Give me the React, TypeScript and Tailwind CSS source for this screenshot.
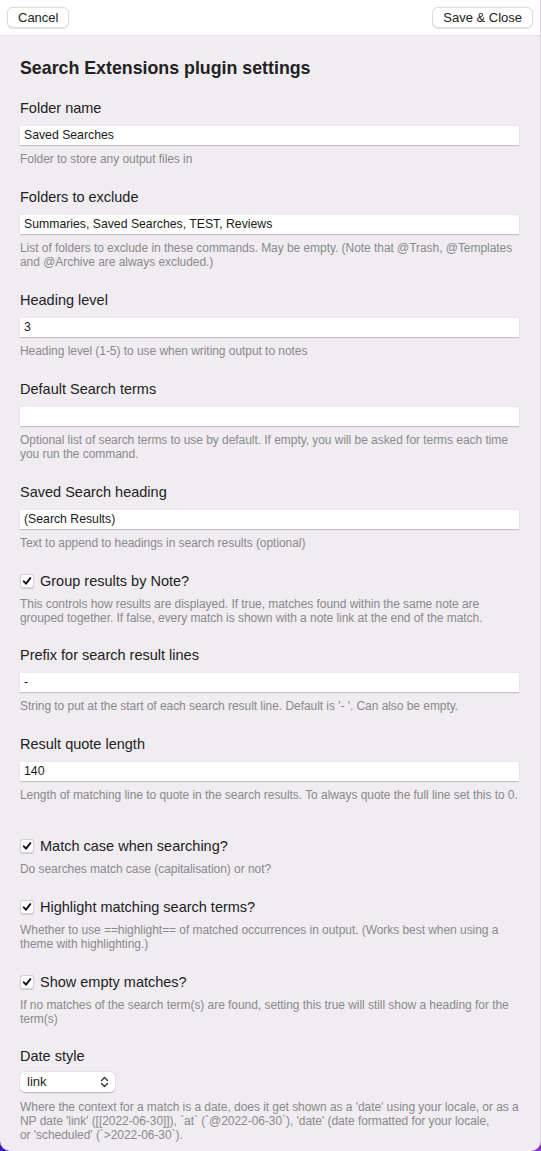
import React from 'react';

type Field =
  | { kind: 'text'; label: string; value: string; help: string[]; gap?: string }
  | { kind: 'check'; label: string; help: string[]; gap?: string }
  | { kind: 'select'; label: string; value: string; help: string[]; gap?: string };

const fields: Field[] = [
  { kind: 'text', label: 'Folder name', value: 'Saved Searches', help: ['Folder to store any output files in'], gap: 'mt-[18px]' },
  {
    kind: 'text',
    label: 'Folders to exclude',
    value: 'Summaries, Saved Searches, TEST, Reviews',
    help: [
      'List of folders to exclude in these commands. May be empty. (Note that @Trash, @Templates',
      'and @Archive are always excluded.)',
    ],
  },
  { kind: 'text', label: 'Heading level', value: '3', help: ['Heading level (1-5) to use when writing output to notes'] },
  {
    kind: 'text',
    label: 'Default Search terms',
    value: '',
    help: [
      'Optional list of search terms to use by default. If empty, you will be asked for terms each time',
      'you run the command.',
    ],
  },
  { kind: 'text', label: 'Saved Search heading', value: '(Search Results)', help: ['Text to append to headings in search results (optional)'] },
  {
    kind: 'check',
    label: 'Group results by Note?',
    help: [
      'This controls how results are displayed. If true, matches found within the same note are',
      'grouped together. If false, every match is shown with a note link at the end of the match.',
    ],
  },
  {
    kind: 'text',
    label: 'Prefix for search result lines',
    value: '-',
    help: ["String to put at the start of each search result line. Default is '- '. Can also be empty."],
    gap: 'mt-5',
  },
  {
    kind: 'text',
    label: 'Result quote length',
    value: '140',
    help: ['Length of matching line to quote in the search results. To always quote the full line set this to 0.'],
  },
  { kind: 'check', label: 'Match case when searching?', help: ['Do searches match case (capitalisation) or not?'], gap: 'mt-[34px]' },
  {
    kind: 'check',
    label: 'Highlight matching search terms?',
    help: [
      'Whether to use ==highlight== of matched occurrences in output. (Works best when using a',
      'theme with highlighting.)',
    ],
  },
  {
    kind: 'check',
    label: 'Show empty matches?',
    help: [
      'If no matches of the search term(s) are found, setting this true will still show a heading for the',
      'term(s)',
    ],
  },
  {
    kind: 'select',
    label: 'Date style',
    value: 'link',
    help: [
      "Where the context for a match is a date, does it get shown as a 'date' using your locale, or as a",
      "NP date 'link' ([[2022-06-30]]), `at` (`@2022-06-30`), 'date' (date formatted for your locale,",
      "or 'scheduled' (`>2022-06-30`).",
    ],
    gap: 'mt-5',
  },
];

function Help({ lines, mt }: { lines: string[]; mt: string }) {
  return (
    <p className={`${mt} text-[12px] leading-[14px] text-[#8a8a8a] tracking-[-0.05px]`}>
      {lines.map((l) => (
        <span key={l} className="block whitespace-nowrap">
          {l}
        </span>
      ))}
    </p>
  );
}

function Checkbox() {
  return (
    <div className="w-[14px] h-[14px] rounded-[3px] bg-white border border-[#d6d3d8] shadow-[0_0.5px_1px_rgba(0,0,0,0.15)] flex items-center justify-center">
      <svg width="10" height="10" viewBox="0 0 10 10" fill="none">
        <path d="M1.8 5.3 L4 7.7 L8.3 2.1" stroke="#111" strokeWidth="1.9" strokeLinecap="round" strokeLinejoin="round" />
      </svg>
    </div>
  );
}

function Row({ f }: { f: Field }) {
  const gap = f.gap ?? 'mt-[21px]';
  if (f.kind === 'check') {
    return (
      <div className={gap}>
        <label className="flex items-center h-5 gap-[6px]">
          <Checkbox />
          <span className="text-[14.5px] leading-5 text-[#222]">{f.label}</span>
        </label>
        <Help lines={f.help} mt="mt-[6px]" />
      </div>
    );
  }
  if (f.kind === 'select') {
    return (
      <div className={gap}>
        <div className="text-[14.5px] leading-5 text-[#222]">{f.label}</div>
        <div className="mt-[6px] w-[95px] h-5 rounded-[5px] bg-white shadow-[0_0.5px_1.5px_rgba(0,0,0,0.25)] flex items-center justify-between pl-[7px] pr-[6px]">
          <span className="text-[13px] text-[#222]">{f.value}</span>
          <svg width="9" height="12" viewBox="0 0 9 12" fill="none">
            <path d="M1.5 4.5 L4.5 1.5 L7.5 4.5" stroke="#333" strokeWidth="1.4" strokeLinecap="round" strokeLinejoin="round" />
            <path d="M1.5 7.5 L4.5 10.5 L7.5 7.5" stroke="#333" strokeWidth="1.4" strokeLinecap="round" strokeLinejoin="round" />
          </svg>
        </div>
        <Help lines={f.help} mt="mt-[8px]" />
      </div>
    );
  }
  return (
    <div className={gap}>
      <div className="text-[14.5px] leading-5 text-[#222]">{f.label}</div>
      <div className="mt-[7px] h-5 bg-white shadow-[0_1px_1px_rgba(0,0,0,0.18)] border-t border-[#ebe8ec] flex items-center px-1">
        <span className="text-[12.25px] text-[#1a1a1a]">{f.value}</span>
      </div>
      <Help lines={f.help} mt="mt-[7px]" />
    </div>
  );
}

export default function App() {
  return (
    <div className="w-[541px] h-[1151px] bg-gradient-to-r from-[#3a1fb0] to-[#8a2fd6] font-['Liberation_Sans',Arial,sans-serif]">
      <div className="h-full bg-[#f0ecf2] rounded-b-[10px] border-r border-[#d9d5db] overflow-hidden flex flex-col">
        <div className="h-[36px] shrink-0 bg-white border-b border-[#e3dfe5] flex items-center justify-between pl-[7px] pr-[7px]">
          <button className="h-[21px] px-[10px] rounded-[6px] bg-white border border-[#dcdcdc] shadow-[0_0.5px_1px_rgba(0,0,0,0.12)] text-[13px] text-[#222]">
            Cancel
          </button>
          <button className="h-[21px] px-[10px] rounded-[6px] bg-white border border-[#dcdcdc] shadow-[0_0.5px_1px_rgba(0,0,0,0.12)] text-[13px] text-[#222]">
            Save &amp; Close
          </button>
        </div>
        <div className="pl-5 pr-[21px]">
          <h1 className="mt-5 text-[17.8px] leading-6 font-bold text-[#222]">Search Extensions plugin settings</h1>
          {fields.map((f) => (
            <Row key={f.label} f={f} />
          ))}
        </div>
      </div>
    </div>
  );
}
